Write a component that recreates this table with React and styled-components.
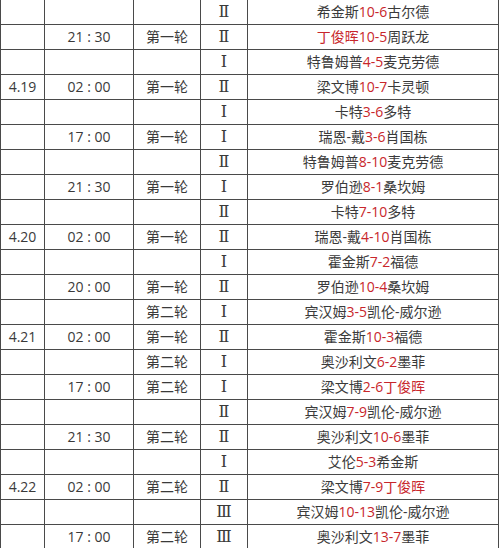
import styled, { createGlobalStyle } from 'styled-components';

const GlobalStyle = createGlobalStyle`
  html, body {
    margin: 0;
    padding: 0;
    background: #ffffff;
  }
  body {
    font-family: "Open Sans", "Noto Sans CJK SC", sans-serif;
  }
`;

const rows = [
  ['', '', '', 'Ⅱ', ['希金斯', '10-6', '古尔德']],
  ['', '21 : 30', '第一轮', 'Ⅱ', ['丁俊晖', '10-5', '周跃龙', 'left']],
  ['', '', '', 'Ⅰ', ['特鲁姆普', '4-5', '麦克劳德']],
  ['4.19', '02 : 00', '第一轮', 'Ⅱ', ['梁文博', '10-7', '卡灵顿']],
  ['', '', '', 'Ⅰ', ['卡特', '3-6', '多特']],
  ['', '17 : 00', '第一轮', 'Ⅰ', ['瑞恩-戴', '3-6', '肖国栋']],
  ['', '', '', 'Ⅱ', ['特鲁姆普', '8-10', '麦克劳德']],
  ['', '21 : 30', '第一轮', 'Ⅰ', ['罗伯逊', '8-1', '桑坎姆']],
  ['', '', '', 'Ⅱ', ['卡特', '7-10', '多特']],
  ['4.20', '02 : 00', '第一轮', 'Ⅱ', ['瑞恩-戴', '4-10', '肖国栋']],
  ['', '', '', 'Ⅰ', ['霍金斯', '7-2', '福德']],
  ['', '20 : 00', '第一轮', 'Ⅱ', ['罗伯逊', '10-4', '桑坎姆']],
  ['', '', '第二轮', 'Ⅰ', ['宾汉姆', '3-5', '凯伦-威尔逊']],
  ['4.21', '02 : 00', '第一轮', 'Ⅱ', ['霍金斯', '10-3', '福德']],
  ['', '', '第二轮', 'Ⅰ', ['奥沙利文', '6-2', '墨菲']],
  ['', '17 : 00', '第二轮', 'Ⅰ', ['梁文博', '2-6', '丁俊晖', 'right']],
  ['', '', '', 'Ⅱ', ['宾汉姆', '7-9', '凯伦-威尔逊']],
  ['', '21 : 30', '第二轮', 'Ⅱ', ['奥沙利文', '10-6', '墨菲']],
  ['', '', '', 'Ⅰ', ['艾伦', '5-3', '希金斯']],
  ['4.22', '02 : 00', '第二轮', 'Ⅱ', ['梁文博', '7-9', '丁俊晖', 'right']],
  ['', '', '', 'Ⅲ', ['宾汉姆', '10-13', '凯伦-威尔逊']],
  ['', '17 : 00', '第二轮', 'Ⅲ', ['奥沙利文', '13-7', '墨菲']],
];

const App = () => {
  return (
    <Page>
      <GlobalStyle />
      <Table>
        <colgroup>
          <col style={{ width: 44 }} />
          <col style={{ width: 89 }} />
          <col style={{ width: 67 }} />
          <col style={{ width: 47 }} />
          <col style={{ width: 251 }} />
        </colgroup>
        <tbody>
          {rows.map(([date, time, round, desk, match], i) => (
            <tr key={i}>
              <Cell>{date}</Cell>
              <Cell>{time}</Cell>
              <Cell>{round}</Cell>
              <Cell>
                <Numeral>{desk}</Numeral>
              </Cell>
              <Cell>
                <Player $hot={match[3] === 'left'}>{match[0]}</Player>
                <Score>{match[1]}</Score>
                <Player $hot={match[3] === 'right'}>{match[2]}</Player>
              </Cell>
            </tr>
          ))}
        </tbody>
      </Table>
    </Page>
  );
};

const Page = styled.div`
  width: 500px;
  height: 548px;
  overflow: hidden;
`;

const Table = styled.table`
  width: 499px;
  margin-top: -1px;
  border-collapse: collapse;
  table-layout: fixed;
`;

const Cell = styled.td`
  height: 24px;
  padding: 0;
  border: 1px solid #4a4a4a;
  text-align: center;
  vertical-align: middle;
  font-size: 14px;
  line-height: 18px;
  color: #3a3a3a;
  white-space: nowrap;
  overflow: hidden;
`;

const Numeral = styled.span`
  display: inline-block;
  line-height: 1;
  font-family: "DejaVu Serif", "Liberation Serif", serif;
  font-size: 16px;
  color: #3a3a3a;
`;

const Player = styled.span`
  color: ${(p) => (p.$hot ? '#c8262b' : '#3a3a3a')};
`;

const Score = styled.span`
  color: #c8262b;
`;

export default App;
